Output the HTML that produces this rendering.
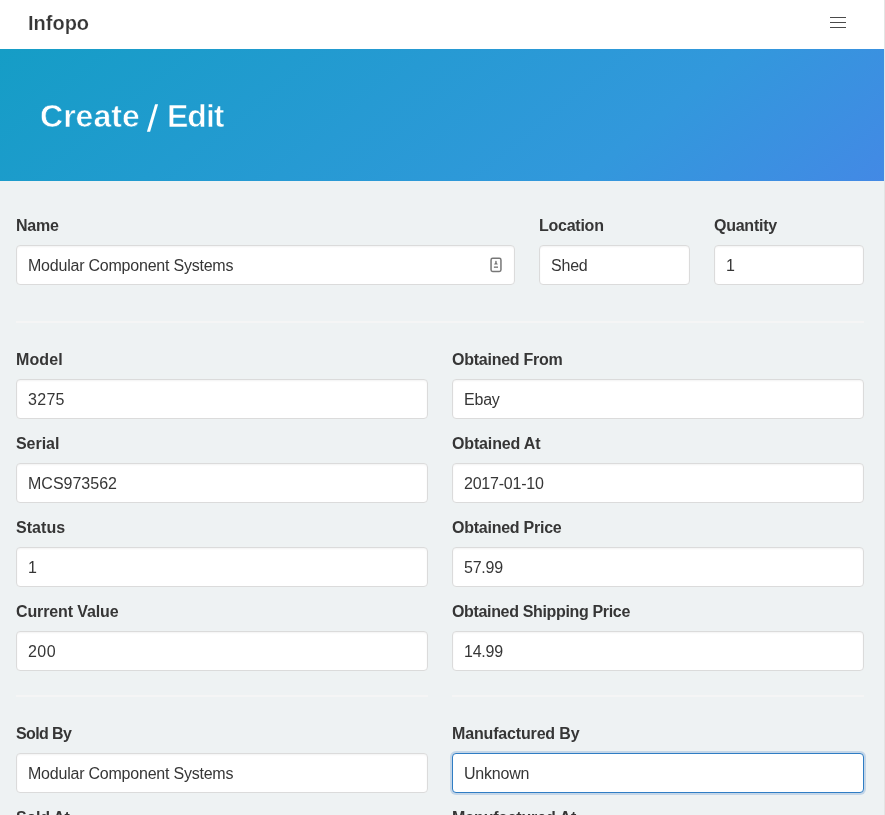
<!DOCTYPE html>
<html><head><meta charset="utf-8">
<style>
*{box-sizing:border-box;margin:0;padding:0}
html,body{width:885px;height:815px;overflow:hidden;background:#eef2f3;font-family:"Liberation Sans",sans-serif;color:#4a4a4a}
.rightedge{position:absolute;left:884px;top:0;width:1px;height:815px;background:#e4e4e4}
.nav{position:absolute;left:0;top:0;width:884px;height:49px;background:#fff}
.brand{-webkit-text-stroke:0.2px #fff;position:absolute;left:28px;top:10px;font-size:20px;font-weight:bold;color:#363636;line-height:26px}
.burger{position:absolute;left:830px;width:16px;height:1px;background:#4a4a4a}
.hero{position:absolute;left:0;top:49px;width:884px;height:132px;background:linear-gradient(141deg,#159dc6 0%,#3298dc 71%,#4389e5 100%)}
.title{-webkit-text-stroke:0.6px rgb(29,155,204);position:absolute;left:40px;top:94px;font-size:32px;letter-spacing:-0.35px;font-weight:bold;color:#fff;line-height:40px}
.lbl{position:absolute;font-size:16px;font-weight:bold;color:#363636;line-height:24px;letter-spacing:-0.25px;margin-top:1px}
.inp{position:absolute;height:40px;background:#fff;border:1px solid #dbdbdb;border-radius:4px;box-shadow:inset 0 1px 2px rgba(10,10,10,.05);font-size:16px;line-height:24px;padding:8px 11px 6px;color:#363636;letter-spacing:-0.22px;white-space:nowrap}
.inp.focus{border-color:#2f7dc4;box-shadow:0 0 0 2px #c4d6e8}
.hr{position:absolute;height:2px;background:#f5f5f5}
</style></head><body><div style="position:absolute;left:0;top:0;width:885px;height:815px;will-change:transform">
<div class="nav">
  <div class="brand">Infopo</div>
  <div class="burger" style="top:17px"></div>
  <div class="burger" style="top:22px"></div>
  <div class="burger" style="top:27px"></div>
</div>
<div class="rightedge"></div>
<div class="hero"><div class="title" style="top:47px;letter-spacing:0.03px">Create</div><div class="title" style="top:47px;left:167px;letter-spacing:-1px">Edit</div><svg style="position:absolute;left:0;top:0" width="300" height="132" viewBox="0 49 300 132"><polygon points="146.9,131.8 150.1,131.8 158.1,104.3 155.1,104.3" fill="#fff"/></svg></div>

<div class="lbl" style="left:16px;top:213px">Name</div>
<div class="inp" style="left:16px;top:245px;width:499px">Modular Component Systems</div>
<svg style="position:absolute;left:484px;top:252px" width="24" height="24" viewBox="0 0 24 24"><rect x="7.05" y="6.35" width="9.9" height="13.1" rx="1.6" fill="none" stroke="#777" stroke-width="1.5"/><path d="M11.95 8.8c-.5 0-.75.4-.75.9v1.2c-.7.4-1.1.9-1.1 1.5v.05h3.7v-.05c0-.6-.4-1.1-1.1-1.5v-1.2c0-.5-.25-.9-.75-.9z" fill="#777"/><rect x="9.9" y="14.4" width="4.1" height="1.6" fill="#8c8c8c"/></svg>
<div class="lbl" style="left:539px;top:213px">Location</div>
<div class="inp" style="left:539px;top:245px;width:151px">Shed</div>
<div class="lbl" style="left:714px;top:213px">Quantity</div>
<div class="inp" style="left:714px;top:245px;width:150px">1</div>

<div class="hr" style="left:16px;top:321px;width:848px"></div>

<div class="lbl" style="left:16px;top:347px;letter-spacing:0.12px">Model</div>
<div class="inp" style="left:16px;top:379px;width:412px;letter-spacing:0.3px">3275</div>
<div class="lbl" style="left:16px;top:431px;letter-spacing:-0.05px">Serial</div>
<div class="inp" style="left:16px;top:463px;width:412px;letter-spacing:0px">MCS973562</div>
<div class="lbl" style="left:16px;top:515px;letter-spacing:0.05px">Status</div>
<div class="inp" style="left:16px;top:547px;width:412px">1</div>
<div class="lbl" style="left:16px;top:599px;letter-spacing:-0.12px">Current Value</div>
<div class="inp" style="left:16px;top:631px;width:412px;letter-spacing:0.45px">200</div>

<div class="lbl" style="left:452px;top:347px">Obtained From</div>
<div class="inp" style="left:452px;top:379px;width:412px">Ebay</div>
<div class="lbl" style="left:452px;top:431px;letter-spacing:-0.15px">Obtained At</div>
<div class="inp" style="left:452px;top:463px;width:412px">2017-01-10</div>
<div class="lbl" style="left:452px;top:515px">Obtained Price</div>
<div class="inp" style="left:452px;top:547px;width:412px">57.99</div>
<div class="lbl" style="left:452px;top:599px;letter-spacing:-0.34px">Obtained Shipping Price</div>
<div class="inp" style="left:452px;top:631px;width:412px">14.99</div>

<div class="hr" style="left:16px;top:695px;width:412px"></div>
<div class="hr" style="left:452px;top:695px;width:412px"></div>

<div class="lbl" style="left:16px;top:721px;letter-spacing:-0.6px">Sold By</div>
<div class="inp" style="left:16px;top:753px;width:412px">Modular Component Systems</div>
<div class="lbl" style="left:16px;top:805px">Sold At</div>
<div class="lbl" style="left:452px;top:721px;letter-spacing:-0.16px">Manufactured By</div>
<div class="inp focus" style="left:452px;top:753px;width:412px">Unknown</div>
<div class="lbl" style="left:452px;top:805px;letter-spacing:-0.1px">Manufactured At</div>
</div></body></html>
